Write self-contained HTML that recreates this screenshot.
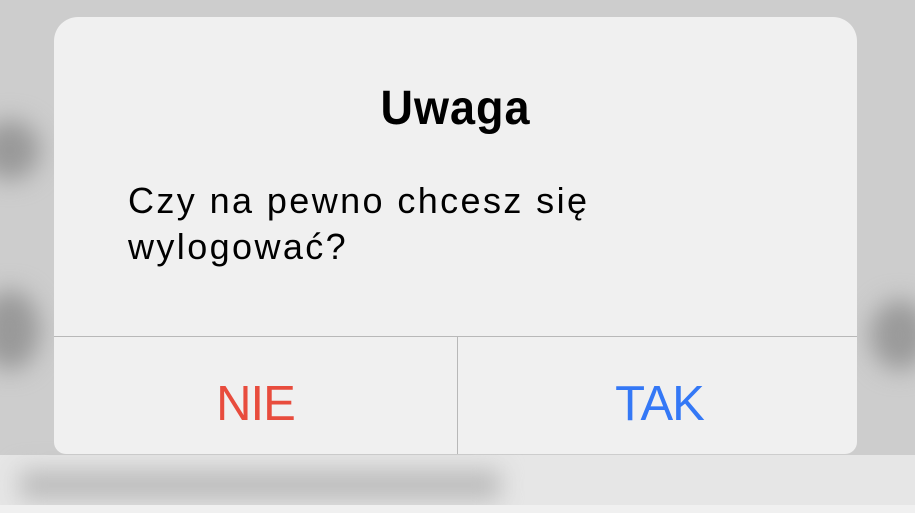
<!DOCTYPE html>
<html><head><meta charset="utf-8"><style>
html,body{margin:0;padding:0;width:915px;height:513px;overflow:hidden;background:#cdcdcd;font-family:"Liberation Sans",sans-serif}
.bl{position:absolute;filter:blur(12px)}
.dlg{position:absolute;top:17px;height:437px;background:#f0f0f0;border-radius:24px 24px 12px 12px;left:54px;width:803px;overflow:hidden}
.t{position:absolute;top:65px;left:0;width:100%;text-align:center;font-size:45px;font-weight:bold;color:#000;letter-spacing:1px;transform:scaleY(1.08)}
.m{position:absolute;left:74px;top:161px;font-size:36px;line-height:46px;color:#000;letter-spacing:2.4px;white-space:nowrap}
.h{position:absolute;left:0;top:319px;width:100%;height:1px;background:#b8b8b8}
.v{position:absolute;left:403px;top:320px;width:1px;height:118px;background:#b8b8b8}
.b{position:absolute;top:359px;font-size:49px;width:403px;text-align:center;letter-spacing:-1px;line-height:56px}
</style></head><body>
<div class="bl" style="left:-20px;top:120px;width:60px;height:60px;background:#999;border-radius:50%"></div>
<div class="bl" style="left:-20px;top:290px;width:60px;height:80px;background:#999;border-radius:50%"></div>
<div class="bl" style="left:870px;top:300px;width:60px;height:70px;background:#9a9a9a;border-radius:50%"></div>
<div style="position:absolute;left:0;top:455px;width:915px;height:58px;background:#e6e6e6"></div>
<div class="bl" style="left:20px;top:470px;width:480px;height:30px;background:#bbb"></div>
<div style="position:absolute;left:0;top:505px;width:915px;height:8px;background:#f0f0f0"></div>
<div class="dlg">
<div class="t">Uwaga</div>
<div class="m">Czy na pewno chcesz się<br>wylogować?</div>
<div class="h"></div><div class="v"></div>
<div class="b" style="left:0;color:#e84c3d">NIE</div>
<div class="b" style="left:404px;color:#3478f6">TAK</div>
</div>
</body></html>
